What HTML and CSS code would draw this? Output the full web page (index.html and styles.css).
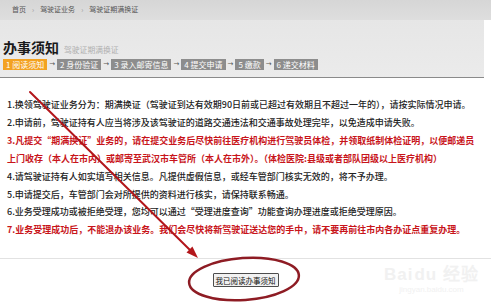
FILE: index.html
```html
<!DOCTYPE html>
<html lang="zh-CN">
<head>
<meta charset="utf-8">
<title>办事须知</title>
<link rel="stylesheet" href="styles.css">
</head>
<body>
<div class="page">
  <div class="crumb">
    <span>首页</span><span class="sep">›</span><span>驾驶证业务</span><span class="sep">›</span><span>驾驶证期满换证</span>
  </div>
  <div class="head">
    <div class="title-row">
      <h1 class="title">办事须知</h1>
      <span class="subtitle">驾驶证期满换证</span>
    </div>
    <div class="steps">
      <span class="step active">1 阅读须知</span><span class="arrow">→</span>
      <span class="step">2 身份验证</span><span class="arrow">→</span>
      <span class="step">3 录入邮寄信息</span><span class="arrow">→</span>
      <span class="step">4 提交申请</span><span class="arrow">→</span>
      <span class="step">5 缴款</span><span class="arrow">→</span>
      <span class="step">6 递交材料</span>
    </div>
  </div>
  <div class="content">
    <p class="line">1.换领驾驶证业务分为：期满换证（驾驶证到达有效期90日前或已超过有效期且不超过一年的），请按实际情况申请。</p>
    <p class="line">2.申请前，驾驶证持有人应当将涉及该驾驶证的道路交通违法和交通事故处理完毕，以免造成申请失败。</p>
    <p class="line red">3.凡提交“期满换证”业务的，请在提交业务后尽快前往医疗机构进行驾驶员体检，并领取纸制体检证明，以便邮递员</p>
    <p class="line red">上门收存（本人在市内）或邮寄至武汉市车管所（本人在市外）。（体检医院:县级或者部队团级以上医疗机构）</p>
    <p class="line">4.请驾驶证持有人如实填写相关信息。凡提供虚假信息，或经车管部门核实无效的，将不予办理。</p>
    <p class="line">5.申请提交后，车管部门会对所提供的资料进行核实，请保持联系畅通。</p>
    <p class="line">6.业务受理成功或被拒绝受理，您均可以通过“受理进度查询”功能查询办理进度或拒绝受理原因。</p>
    <p class="line red">7.业务受理成功后，不能退办该业务。我们会尽快将新驾驶证送达您的手中，请不要再前往市内各办证点重复办理。</p>
  </div>
  <div class="footer">
    <button class="confirm" type="button">我已阅读办事须知</button>
    <div class="watermark">
      <div class="wm-logo">Bai<span class="wm-du">du</span> 经验</div>
      <div class="wm-url">jingyan.baidu.com</div>
    </div>
  </div>
  <svg class="annot" width="491" height="305" viewBox="0 0 491 305">
    <path d="M30 92 L193 253" stroke="#b3161b" stroke-width="2" fill="none" stroke-linecap="round"/>
    <polygon points="198,258 186.5,252.6 192.4,246.6" fill="#b3161b"/>
    <ellipse cx="244" cy="279" rx="55" ry="21" transform="rotate(-4 244 279)" stroke="#8e1c24" stroke-width="2.5" fill="none"/>
  </svg>
</div>
</body>
</html>
```

FILE: styles.css
```css
html, body {
  margin: 0;
  padding: 0;
  background: #ffffff;
}

.page {
  position: relative;
  width: 491px;
  height: 305px;
  overflow: hidden;
  font-family: "Noto Sans CJK SC", "Noto Sans", sans-serif;
  color: #222;
}

.crumb {
  height: 20px;
  line-height: 19px;
  padding-left: 12px;
  font-size: 7px;
  color: #555;
  background: linear-gradient(#d6d6d6, #dedede);
  display: flex;
  gap: 6px;
}

.crumb .sep {
  color: #999;
}

.head {
  background: linear-gradient(#e6e6e6, #ebebeb);
  padding: 19px 0 7px 3px;
  border-bottom: 1px solid #8a8a8a;
  margin-right: 7px;
}

.title-row {
  display: flex;
  align-items: flex-end;
  gap: 5px;
  height: 17px;
}

.title {
  margin: 0;
  font-size: 14px;
  line-height: 17px;
  font-weight: 700;
  color: #1a1a1a;
}

.subtitle {
  font-size: 7.8px;
  line-height: 12px;
  color: #b0b0b0;
}

.steps {
  display: flex;
  align-items: center;
  margin-top: 3px;
  height: 11px;
}

.step {
  background: #8d8d8d;
  color: #fff;
  font-size: 8px;
  line-height: 11px;
  height: 11px;
  padding: 0 3px;
  white-space: nowrap;
}

.step.active {
  background: #f3a221;
}

.arrow {
  font-family: "DejaVu Sans", sans-serif;
  font-size: 7px;
  color: #555;
  margin: 0 2px;
  line-height: 11px;
}

.content {
  padding: 18px 0 0 7px;
  height: 162px;
  border-bottom: 1px solid #e2e2e2;
}

.line {
  margin: 0;
  font-size: 9px;
  line-height: 17.9px;
  white-space: nowrap;
  font-weight: 500;
  color: #222;
}

.line.red {
  color: #c8141a;
  font-weight: 700;
}

.footer {
  position: relative;
  display: flex;
  justify-content: center;
  padding-top: 14px;
}

.confirm {
  font-family: "Noto Sans CJK SC", sans-serif;
  font-size: 7.5px;
  line-height: 11px;
  height: 14px;
  padding: 0 2px;
  background: #f2f2f2;
  border: 1px solid #4d4d4d;
  border-radius: 1px;
  color: #111;
}

.watermark {
  position: absolute;
  left: 384px;
  top: 6px;
  color: #f1f1f1;
  text-align: center;
}

.wm-logo {
  font-family: "Liberation Sans", sans-serif;
  font-size: 17px;
  font-weight: 700;
  line-height: 20px;
  letter-spacing: 1px;
}

.wm-du {
  margin-left: 1px;
}

.wm-url {
  font-family: "Liberation Sans", sans-serif;
  font-size: 8px;
  line-height: 10px;
}

.annot {
  position: absolute;
  left: 0;
  top: 0;
  pointer-events: none;
}
```
